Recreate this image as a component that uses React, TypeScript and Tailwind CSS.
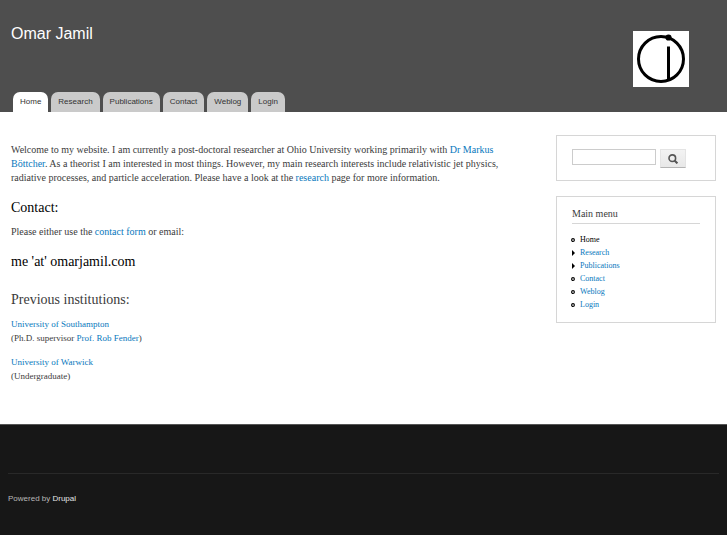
const tabs = ["Home", "Research", "Publications", "Contact", "Weblog", "Login"];

const menu = [
  { label: "Home", active: true },
  { label: "Research", children: true },
  { label: "Publications", children: true },
  { label: "Contact" },
  { label: "Weblog" },
  { label: "Login" },
];

const link = "text-[#0878bd]";

function Logo() {
  return (
    <svg viewBox="0 0 56 56" className="h-14 w-14 bg-white" role="img" aria-label="Home">
      <circle cx="28" cy="28" r="22.5" fill="none" stroke="#000" strokeWidth="3" />
      <path d="M35.5 15.5V49" stroke="#000" strokeWidth="3" />
      <circle cx="35.5" cy="6.5" r="3.1" />
    </svg>
  );
}

function Header() {
  return (
    <header className="bg-[#4e4e4e] pl-[11px] pr-[38px] font-['Liberation_Sans',sans-serif]">
      <div className="flex h-[92px] justify-between">
        <a href="#" className="mt-[22px] text-[16px] leading-6 text-[#fffeff]">Omar Jamil</a>
        <a href="#" className="mt-[31px]"><Logo /></a>
      </div>
      <nav>
        <ul className="flex gap-[3px] pl-[2px]">
          {tabs.map((tab, i) => (
            <li key={tab}>
              <a
                href="#"
                className={`block h-5 rounded-t-[7px] px-[7px] text-[8px] leading-[19px] text-[#333] ${i === 0 ? "bg-white" : "bg-[#cacaca]"}`}
              >
                {tab}
              </a>
            </li>
          ))}
        </ul>
      </nav>
    </header>
  );
}

function Content() {
  return (
    <main className="min-w-0 flex-1 pt-2 text-[10px] leading-[14px]">
      <p>
        Welcome to my website. I am currently a post-doctoral researcher at Ohio University working primarily with{" "}
        <a href="#" className={link}>Dr Markus Böttcher</a>. As a theorist I am interested in most things. However, my main
        research interests include relativistic jet physics, radiative processes, and particle acceleration. Please have a look at the{" "}
        <a href="#" className={link}>research</a> page for more information.
      </p>
      <h2 className="mt-[13px] text-[14px] leading-5 text-black">Contact:</h2>
      <p className="mt-[7px]">
        Please either use the <a href="#" className={link}>contact form</a> or email:
      </p>
      <h2 className="mt-[13px] text-[14px] leading-5 text-black">me 'at' omarjamil.com</h2>
      <h2 className="mt-[18px] text-[14px] leading-5">Previous institutions:</h2>
      <p className="mt-[7px] text-[9px]">
        <a href="#" className={link}>University of Southampton</a>
        <br />
        (Ph.D. supervisor <a href="#" className={link}>Prof. Rob Fender</a>)
      </p>
      <p className="mt-[10px] text-[9px]">
        <a href="#" className={link}>University of Warwick</a>
        <br />
        (Undergraduate)
      </p>
    </main>
  );
}

function Sidebar() {
  return (
    <aside className="w-[160px] shrink-0">
      <form className="flex h-[46px] gap-1 border border-[#d6d6d6] px-[15px] pt-[13px]" onSubmit={(e) => e.preventDefault()}>
        <input type="search" aria-label="Search" className="h-4 w-[84px] border border-[#ccc] bg-white px-1 text-[9px] outline-none" />
        <button
          aria-label="Submit search"
          className="flex h-[19px] w-[26px] items-center justify-center border border-[#e4e4e4] border-b-[#b4b4b4] bg-linear-to-b from-[#f3f3f3] to-[#e8e8e8]"
        >
          <svg viewBox="0 0 10 10" className="h-[10px] w-[10px]" fill="none" stroke="#555" strokeWidth="1.6">
            <circle cx="4.3" cy="4.2" r="3.3" />
            <path d="M6.5 6.5L9.4 9.4" strokeWidth="2" />
          </svg>
        </button>
      </form>
      <nav className="mt-[15px] border border-[#d6d6d6] px-[15px] pt-[10px] pb-[11px]">
        <h2 className="border-b border-[#d6d6d6] pb-[2px] text-[10px] leading-[14px]">Main menu</h2>
        <ul className="mt-[9px] text-[8px] leading-[13px]">
          {menu.map((item) => (
            <li key={item.label} className="flex items-center gap-[5px]">
              <svg viewBox="0 0 4 6" className="-ml-[1px] h-[6px] w-1">
                {item.children ? <path d="M1 0L4 3L1 6Z" /> : <circle cx="2" cy="3" r="1.4" fill="none" stroke="#000" strokeWidth="1.1" />}
              </svg>
              <a href="#" className={item.active ? "text-black" : link}>{item.label}</a>
            </li>
          ))}
        </ul>
      </nav>
    </aside>
  );
}

export default function App() {
  return (
    <div className="bg-white font-['Liberation_Serif',serif] text-[#3b3b3b]">
      <Header />
      <div className="flex gap-[37px] pt-[23px] pr-[11px] pb-[41px] pl-[11px]">
        <Content />
        <Sidebar />
      </div>
      <footer className="border-t border-[#555] bg-[#171717] px-2 pt-12 pb-[30px] font-['Liberation_Sans',sans-serif]">
        <p className="border-t border-[#292929] pt-[18px] text-[8px] leading-[13px] text-[#b8b8b8]">
          Powered by <a href="#" className="text-[#e4e4e4]">Drupal</a>
        </p>
      </footer>
    </div>
  );
}
